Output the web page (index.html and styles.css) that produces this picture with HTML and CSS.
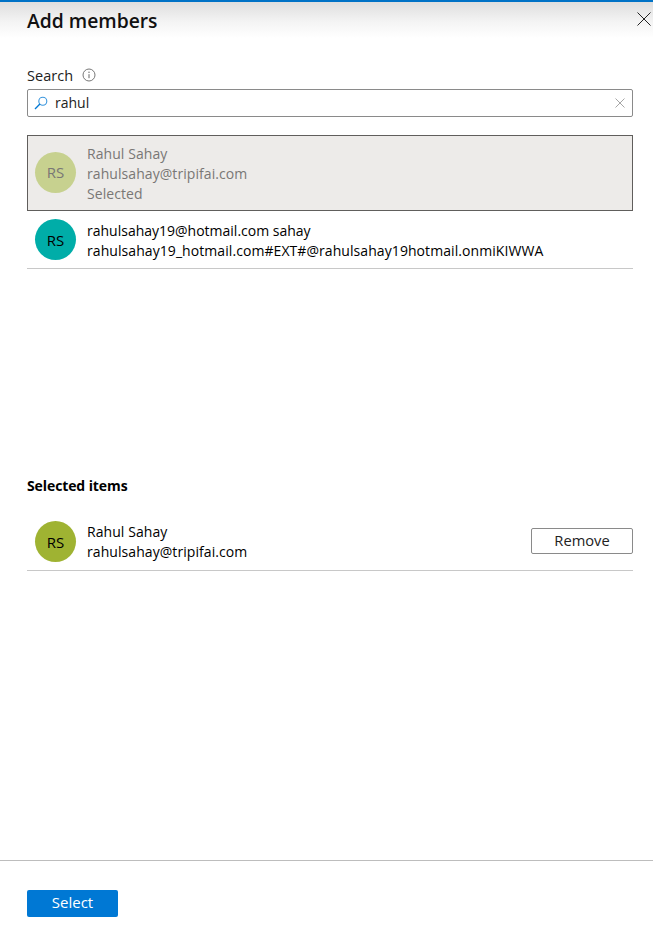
FILE: index.html
```html
<!DOCTYPE html>
<html lang="en">
<head>
<meta charset="utf-8">
<title>Add members</title>
<link rel="stylesheet" href="styles.css">
</head>
<body>
<div class="panel">
  <header class="head">
    <h1 class="title">Add members</h1>
    <button class="close" aria-label="Close">
      <svg width="14" height="14" viewBox="0 0 14 14"><path d="M0.5 0.5L13.5 13.5M13.5 0.5L0.5 13.5" stroke="#222" stroke-width="1" fill="none"/></svg>
    </button>
  </header>
  <main class="body">
    <div class="label-row">
      <span class="label">Search</span>
      <svg class="info" width="14" height="14" viewBox="0 0 14 14"><circle cx="7" cy="7" r="6" fill="none" stroke="#777" stroke-width="1"/><path d="M7 6.2V10.2" stroke="#666" stroke-width="1"/><circle cx="7" cy="4.3" r="0.7" fill="#666"/></svg>
    </div>
    <div class="search">
      <svg class="lens" width="14" height="14" viewBox="0 0 14 14"><circle cx="8.8" cy="5.2" r="4" fill="none" stroke="#3a96dd" stroke-width="1.1"/><path d="M5.9 8L1 13" stroke="#0078d4" stroke-width="1.3"/></svg>
      <span class="query">rahul</span>
      <svg class="clear" width="10" height="10" viewBox="0 0 10 10"><path d="M0.5 0.5L9.5 9.5M9.5 0.5L0.5 9.5" stroke="#a6a6a6" stroke-width="1" fill="none"/></svg>
    </div>
    <ul class="results">
      <li class="item is-selected">
        <span class="avatar avatar-olive-faded">RS</span>
        <div class="lines"><div>Rahul Sahay</div><div>rahulsahay@tripifai.com</div><div>Selected</div></div>
      </li>
      <li class="item is-ruled">
        <span class="avatar avatar-teal">RS</span>
        <div class="lines"><div class="line-tight">rahulsahay19@hotmail.com sahay</div><div>rahulsahay19_hotmail.com#EXT#@rahulsahay19hotmail.onmiKIWWA</div></div>
      </li>
    </ul>
    <h2 class="subhead">Selected items</h2>
    <div class="item is-ruled picked">
      <span class="avatar avatar-olive">RS</span>
      <div class="lines"><div>Rahul Sahay</div><div>rahulsahay@tripifai.com</div></div>
      <button class="remove">Remove</button>
    </div>
  </main>
  <footer class="foot">
    <button class="primary">Select</button>
  </footer>
</div>
</body>
</html>
```
FILE: styles.css
```css
* { box-sizing: border-box; }
html, body { margin: 0; height: 100%; }
body {
  font-family: "Open Sans", "Noto Sans", sans-serif;
  font-size: 14px;
  letter-spacing: 0.07px;
  color: #000;
  background: #fff;
  overflow: hidden;
}
.panel {
  height: 937px;
  display: flex;
  flex-direction: column;
  border-top: 2px solid #0072c6;
}
.head {
  height: 40px;
  padding: 0 2px 0 27px;
  display: flex;
  justify-content: space-between;
  align-items: flex-start;
  background: linear-gradient(#dedede 0, #f4f4f4 20px, #fff 36px);
}
.title {
  margin: 5px 0 0;
  font-size: 19.3px;
  line-height: 28px;
  font-weight: 600;
  letter-spacing: 0;
  color: #111;
}
.close {
  margin-top: 10px;
  padding: 0;
  border: 0;
  background: none;
  display: flex;
}
.body {
  flex: 1;
  padding: 23px 20px 0 27px;
}
.label-row {
  display: flex;
  align-items: center;
  gap: 9px;
  height: 20px;
}
.label { color: #222; font-size: 14.5px; }
.search {
  margin-top: 4px;
  height: 28px;
  border: 1px solid #8a8a8a;
  border-radius: 2px;
  padding: 0 8px 0 6px;
  display: flex;
  align-items: center;
}
.query { margin-left: 7px; padding-bottom: 2px; flex: 1; color: #222; letter-spacing: 0; }
.clear { margin-right: -1px; }
.results {
  list-style: none;
  margin: 18px 0 0;
  padding: 0;
  height: 341px;
}
.item {
  display: flex;
  align-items: center;
  padding: 0 0 0 8px;
}
.is-selected {
  height: 76px;
  background: #edebe9;
  border: 1px solid #605e5c;
  color: #797775;
  padding-left: 7px;
}
.is-ruled {
  height: 58px;
  border-bottom: 1px solid #c8c8c8;
}
.avatar {
  width: 41px;
  height: 41px;
  border-radius: 50%;
  flex: none;
  display: flex;
  align-items: center;
  justify-content: center;
  font-size: 15px;
  letter-spacing: 0;
}
.is-selected .avatar { margin-top: -2px; }
.avatar-olive-faded { background: #c7d18f; color: #797775; }
.avatar-teal { background: #00ada8; }
.avatar-olive { background: #9fb332; }
.lines {
  margin-left: 11px;
  padding-top: 2px;
  line-height: 20px;
  flex: 1;
  white-space: nowrap;
}
.line-tight { letter-spacing: 0; }
.subhead {
  margin: 0;
  font-size: 14px;
  line-height: 20px;
  font-weight: 700;
  letter-spacing: -0.1px;
}
.picked { margin-top: 17px; height: 58px; }
.picked .lines { padding-top: 0; }
.remove {
  width: 102px;
  height: 26px;
  margin-bottom: 2px;
  padding: 0 0 2px;
  background: #fff;
  border: 1px solid #8a8a8a;
  border-radius: 2px;
  font: inherit;
  font-size: 14.7px;
  color: #222;
}
.foot {
  height: 77px;
  border-top: 1px solid #bdbdbd;
  padding: 29px 0 0 27px;
}
.primary {
  display: block;
  width: 91px;
  height: 27px;
  padding: 0 0 4px;
  border: 0;
  border-radius: 2px;
  background: #0078d4;
  color: #fff;
  font: inherit;
  font-size: 15px;
}
```
